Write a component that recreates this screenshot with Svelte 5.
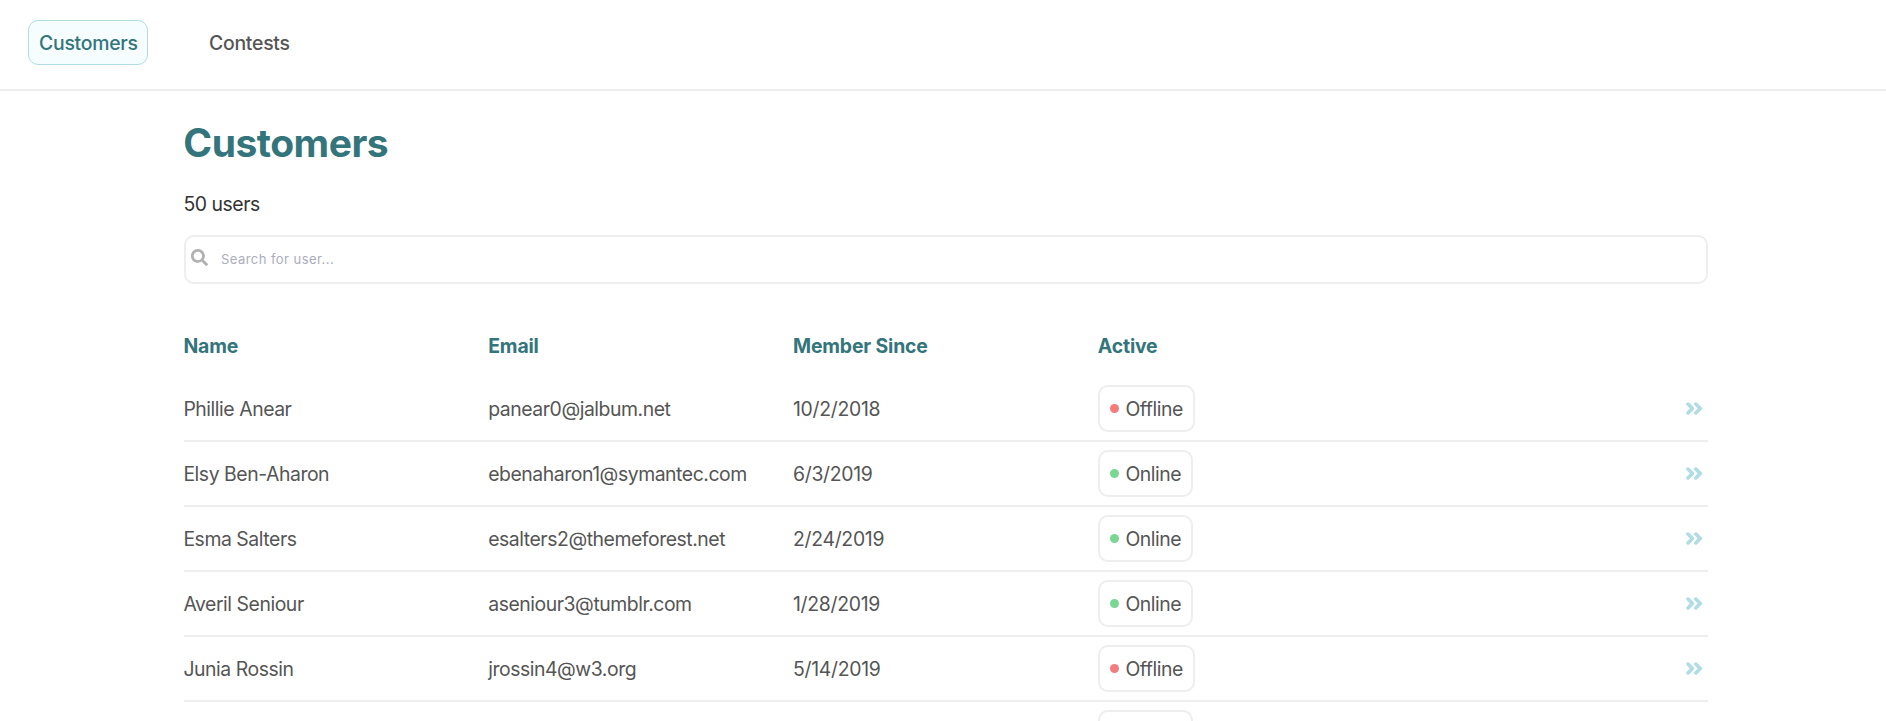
<script>
  const customers = [
    { name: 'Phillie Anear', email: 'panear0@jalbum.net', since: '10/2/2018', active: false },
    { name: 'Elsy Ben-Aharon', email: 'ebenaharon1@symantec.com', since: '6/3/2019', active: true },
    { name: 'Esma Salters', email: 'esalters2@themeforest.net', since: '2/24/2019', active: true },
    { name: 'Averil Seniour', email: 'aseniour3@tumblr.com', since: '1/28/2019', active: true },
    { name: 'Junia Rossin', email: 'jrossin4@w3.org', since: '5/14/2019', active: false },
    { name: '', email: '', since: '', active: true }
  ];
</script>

<div class="page">
  <nav>
    <a class="link current" href="#customers">Customers</a>
    <a class="link" href="#contests">Contests</a>
  </nav>
  <main>
    <h1>Customers</h1>
    <p class="count">50 users</p>
    <label class="search">
      <svg viewBox="0 0 512 512" width="17" height="17"><path fill="currentColor" d="M505 442.7L405.3 343c-4.500-4.500-10.600-7-17-7H372c27.600-35.300 44-79.700 44-128C416 93.100 322.900 0 208 0S0 93.100 0 208s93.100 208 208 208c48.300 0 92.700-16.400 128-44v16.300c0 6.400 2.500 12.500 7 17l99.700 99.700c9.400 9.400 24.600 9.400 33.900 0l28.300-28.300c9.400-9.400 9.400-24.600.1-34zM208 336c-70.700 0-128-57.200-128-128 0-70.700 57.200-128 128-128 70.700 0 128 57.200 128 128 0 70.700-57.200 128-128 128z" /></svg>
      <input type="text" placeholder="Search for user..." />
    </label>
    <div class="row head">
      <span>Name</span><span>Email</span><span>Member Since</span><span>Active</span>
    </div>
    {#each customers as c}
      <div class="row">
        <span>{c.name}</span>
        <span class="email">{c.email}</span>
        <span class="date">{c.since}</span>
        <div class="badge">
          <i class="dot" class:online={c.active}></i>
          <span>{c.active ? 'Online' : 'Offline'}</span>
        </div>
        <svg class="more" viewBox="0 0 17 13" width="17" height="13"><path d="M2 2L6.400 6.500L2 11M9.800 2L14.300 6.500L9.800 11" fill="none" stroke="currentColor" stroke-width="3.500" stroke-linecap="round" stroke-linejoin="round" /></svg>
      </div>
    {/each}
  </main>
</div>

<style>
  :global(body) { margin: 0; background: #fff; }
  .page {
    height: 721px;
    overflow: hidden;
    font-family: Inter, "Liberation Sans", sans-serif;
    font-size: 19.4px;
    letter-spacing: -0.45px;
    color: #555;
  }
  nav {
    box-sizing: border-box;
    height: 91px;
    padding: 20px 28px;
    display: flex;
    align-items: flex-start;
    gap: 50px;
    border-bottom: 2px solid #eee;
  }
  .link {
    box-sizing: border-box;
    height: 45px;
    padding: 0 10px;
    border: 1px solid transparent;
    border-radius: 10px;
    line-height: 44px;
    font-weight: 500;
    letter-spacing: -0.25px;
    color: #555;
    text-decoration: none;
  }
  .current { width: 120px; color: #33757b; background: #f5fdff; border-color: #b0dce4; }
  main { width: 1524px; margin-left: 184px; }
  h1 {
    margin: 0 0 0 -0.7px;
    padding: 27px 0 1px;
    font-size: 39px;
    line-height: 50px;
    font-weight: 700;
    letter-spacing: -0.5px;
    color: #33757b;
  }
  .count { margin: 23px 0 19px -0.6px; line-height: 24px; color: #333; }
  .search {
    box-sizing: border-box;
    height: 49px;
    display: flex;
    align-items: center;
    gap: 13px;
    padding: 0 5px;
    border: 2px solid #eee;
    border-radius: 10px;
    color: #b0b0b0;
  }
  .search svg { margin-top: -4px; }
  input {
    flex: 1;
    border: 0;
    padding: 0 0 2px;
    outline: 0;
    background: none;
    font-family: Inter, "Liberation Sans", sans-serif;
    font-size: 13px;
    letter-spacing: 0.45px;
  }
  input::placeholder { color: #aaadbe; opacity: 1; }
  .row {
    box-sizing: border-box;
    height: 65px;
    display: grid;
    grid-template-columns: repeat(5, 1fr);
    align-items: center;
    border-bottom: 2px solid #eee;
  }
  .row > span { margin-left: -0.6px; }
  .date { letter-spacing: -0.3px; }
  .head {
    height: 63px;
    margin-top: 30px;
    border: 0;
    font-weight: 700;
    letter-spacing: -0.15px;
    color: #33757b;
  }
  .badge {
    box-sizing: border-box;
    height: 47px;
    justify-self: start;
    display: flex;
    align-items: center;
    gap: 6px;
    padding: 0 10px;
    border: 2px solid #eee;
    border-radius: 10px;
  }
  .dot { width: 9px; height: 9px; border-radius: 50%; background: #f47c7c; }
  .online { background: #78d891; }
  .more { justify-self: end; margin: 0 5px 1px 0; color: #b0dce4; }
</style>
